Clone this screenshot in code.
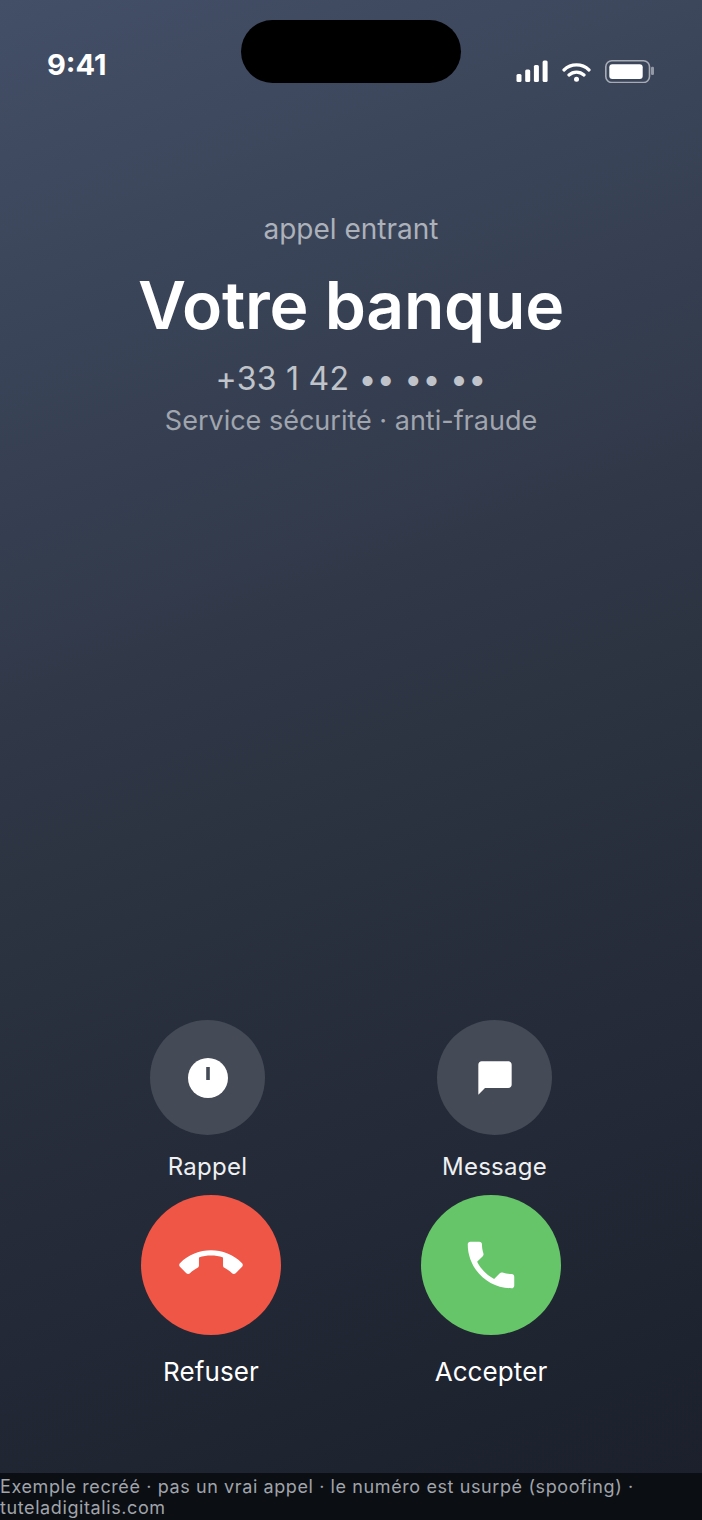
<div class="screen">
  <div class="status">
    <span class="time">9:41</span>
    <div class="island"></div>
    <div class="sys">
      <svg width="34" height="23" viewBox="0 0 34 23"><g fill="#fff"><rect x="2.500" y="14" width="5" height="8" rx="1.500"/><rect x="11.200" y="9.500" width="5" height="12.500" rx="1.500"/><rect x="19.900" y="5" width="5" height="17" rx="1.500"/><rect x="28.600" y="0.500" width="5" height="21.500" rx="1.500"/></g></svg>
      <svg width="30" height="23" viewBox="0 0 30 23"><path d="M3 10a18 18 0 0 1 25 0M8 15a11 11 0 0 1 15 0" fill="none" stroke="#fff" stroke-width="3.200" stroke-linecap="round"/><circle cx="15.500" cy="19.300" r="2.500" fill="#fff"/></svg>
      <svg width="50" height="23" viewBox="0 0 50 23"><rect x="1.800" y="0.800" width="43.700" height="21.700" rx="6" fill="none" stroke="#fff" stroke-opacity=".55" stroke-width="1.600"/><rect x="5.300" y="4.300" width="33.400" height="14.700" rx="3" fill="#fff"/><rect x="47" y="6.700" width="3" height="8.300" rx="1.200" fill="#fff" fill-opacity=".45"/></svg>
    </div>
  </div>
  <main class="info">
    <p class="label">appel entrant</p>
    <h1>Votre banque</h1>
    <p class="num">+33 1 42 •• •• ••</p>
    <p class="desc">Service sécurité · anti-fraude</p>
  </main>
  <div class="actions">
    <div class="row small">
      <div class="act"><div class="c sm"><svg width="40" height="40" viewBox="0 0 40 40"><circle cx="20" cy="20" r="20" fill="#fff"/><rect x="18.200" y="9" width="3.600" height="13" fill="#444a56"/></svg></div><span>Rappel</span></div>
      <div class="act"><div class="c sm"><svg width="40" height="40" viewBox="0 0 24 24"><path d="M20 2H4c-1.100 0-2 .9-2 2v18l4-4h14c1.100 0 2-.9 2-2V4c0-1.100-.9-2-2-2z" fill="#fff"/></svg></div><span>Message</span></div>
    </div>
    <div class="row big">
      <div class="act"><div class="c lg red"><svg class="hang" width="62" height="62" viewBox="0 0 24 24"><path d="M6.620 10.790c1.440 2.830 3.760 5.140 6.590 6.590l2.200-2.200c.27-.27.67-.36 1.020-.24 1.120.37 2.330.57 3.570.57.55 0 1 .45 1 1V20c0 .55-.45 1-1 1-9.390 0-17-7.610-17-17 0-.55.45-1 1-1h3.500c.55 0 1 .45 1 1 0 1.250.2 2.450.57 3.570.11.35.03.74-.25 1.020l-2.200 2.200z" fill="#fff"/></svg></div><span>Refuser</span></div>
      <div class="act"><div class="c lg green"><svg width="62" height="62" viewBox="0 0 24 24"><path d="M6.620 10.790c1.440 2.830 3.760 5.140 6.590 6.590l2.200-2.200c.27-.27.67-.36 1.020-.24 1.120.37 2.330.57 3.570.57.55 0 1 .45 1 1V20c0 .55-.45 1-1 1-9.390 0-17-7.610-17-17 0-.55.45-1 1-1h3.500c.55 0 1 .45 1 1 0 1.250.2 2.450.57 3.570.11.35.03.74-.25 1.020l-2.200 2.200z" fill="#fff"/></svg></div><span>Accepter</span></div>
    </div>
  </div>
  <footer>Exemple recréé · pas un vrai appel · le numéro est usurpé (spoofing) · tuteladigitalis.com</footer>
</div>
<style>
  :global(body){margin:0;background:#1a1f2b}
  .screen{width:702px;height:1520px;display:flex;flex-direction:column;background:linear-gradient(160deg,#434f67 0%,#2c3341 50%,#1a1f2b 100%);font-family:Inter,sans-serif;color:#fff;overflow:hidden}
  .status{height:100px;display:flex;justify-content:space-between;position:relative;flex:none}
  .time{font-size:29px;font-weight:700;margin:47px 0 0 47px;line-height:36px}
  .island{position:absolute;left:241px;top:20px;width:220px;height:63px;border-radius:32px;background:#000}
  .sys{display:flex;gap:13px;margin:60px 48px 0 0;height:23px}
  .info{text-align:center;padding-top:111px;flex:1}
  p,h1{margin:0}
  .label{font-size:28px;line-height:36px;color:#acb1ba}
  h1{font-size:66px;font-weight:600;line-height:82px;margin-top:17px;letter-spacing:-.25px}
  .num{font-size:32px;line-height:40px;color:#c0c4ca;margin-top:13px;letter-spacing:.25px}
  .desc{font-size:27px;line-height:36px;color:#a0a5ae;margin-top:4px}
  .actions{flex:none;height:453px}
  .row{display:flex;justify-content:center}
  .act{display:flex;flex-direction:column;align-items:center}
  .c{border-radius:50%;display:flex;align-items:center;justify-content:center}
  .sm{width:115px;height:115px;background:#444a56}
  .lg{width:140px;height:140px}
  .red{background:#ef5646}.green{background:#66c568}
  .hang{transform:rotate(135deg)}
  .small{gap:172px}.big{gap:140px;margin-top:13px}
  .small span{font-size:24px;line-height:30px;margin-top:17px;letter-spacing:.25px;color:#eef0f2}
  .big span{font-size:26px;line-height:32px;margin-top:21px;letter-spacing:.1px}
  footer{height:47px;box-sizing:border-box;padding-top:3px;background:#0b0e13;color:#a0a4ab;font-size:18px;line-height:21px;letter-spacing:.6px;flex:none}
</style>
